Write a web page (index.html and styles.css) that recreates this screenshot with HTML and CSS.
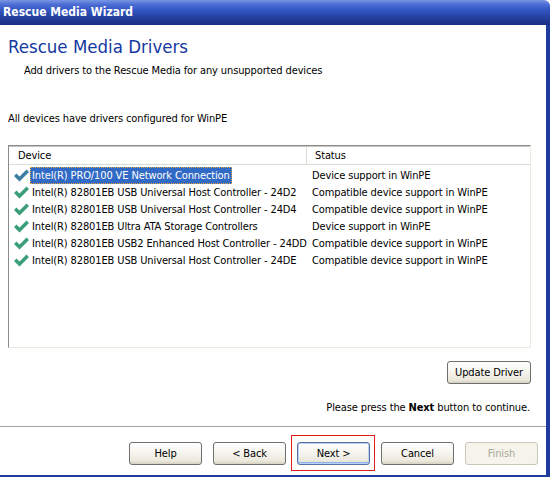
FILE: index.html
```html
<!DOCTYPE html>
<html lang="en">
<head>
    <meta charset="UTF-8">
    <title>Rescue Media Wizard</title>
    <link rel="stylesheet" href="styles.css">
</head>
<body>
    <div class="window">
        <div class="titlebar">Rescue Media Wizard</div>

        <div class="frame">
            <!-- Page header -->
            <h1 class="page-title">Rescue Media Drivers</h1>
            <div class="page-sub">Add drivers to the Rescue Media for any unsupported devices</div>

            <div class="summary">All devices have drivers configured for WinPE</div>

            <!-- Device list -->
            <div class="list">
                <div class="list-head">
                    <div class="col-device">Device</div>
                    <div class="col-status">Status</div>
                </div>
                <div class="row selected">
                    <div class="cell-device">
                        <svg class="check" viewBox="0 0 15 13"><polygon points="0,7 2.5,4.5 5.5,7.5 12.5,0.5 15,3 5.5,12.5"/></svg>
                        <span class="name">Intel(R) PRO/100 VE Network Connection</span>
                    </div>
                    <div class="cell-status">Device support in WinPE</div>
                </div>
                <div class="row">
                    <div class="cell-device">
                        <svg class="check" viewBox="0 0 15 13"><polygon points="0,7 2.5,4.5 5.5,7.5 12.5,0.5 15,3 5.5,12.5"/></svg>
                        <span class="name">Intel(R) 82801EB USB Universal Host Controller - 24D2</span>
                    </div>
                    <div class="cell-status">Compatible device support in WinPE</div>
                </div>
                <div class="row">
                    <div class="cell-device">
                        <svg class="check" viewBox="0 0 15 13"><polygon points="0,7 2.5,4.5 5.5,7.5 12.5,0.5 15,3 5.5,12.5"/></svg>
                        <span class="name">Intel(R) 82801EB USB Universal Host Controller - 24D4</span>
                    </div>
                    <div class="cell-status">Compatible device support in WinPE</div>
                </div>
                <div class="row">
                    <div class="cell-device">
                        <svg class="check" viewBox="0 0 15 13"><polygon points="0,7 2.5,4.5 5.5,7.5 12.5,0.5 15,3 5.5,12.5"/></svg>
                        <span class="name">Intel(R) 82801EB Ultra ATA Storage Controllers</span>
                    </div>
                    <div class="cell-status">Device support in WinPE</div>
                </div>
                <div class="row">
                    <div class="cell-device">
                        <svg class="check" viewBox="0 0 15 13"><polygon points="0,7 2.5,4.5 5.5,7.5 12.5,0.5 15,3 5.5,12.5"/></svg>
                        <span class="name">Intel(R) 82801EB USB2 Enhanced Host Controller - 24DD</span>
                    </div>
                    <div class="cell-status">Compatible device support in WinPE</div>
                </div>
                <div class="row">
                    <div class="cell-device">
                        <svg class="check" viewBox="0 0 15 13"><polygon points="0,7 2.5,4.5 5.5,7.5 12.5,0.5 15,3 5.5,12.5"/></svg>
                        <span class="name">Intel(R) 82801EB USB Universal Host Controller - 24DE</span>
                    </div>
                    <div class="cell-status">Compatible device support in WinPE</div>
                </div>
            </div>

            <div class="update-row">
                <button class="btn wide">Update Driver</button>
            </div>

            <div class="hint">Please press the <b>Next</b> button to continue.</div>

            <!-- Wizard buttons -->
            <div class="footer">
                <button class="btn">Help</button>
                <button class="btn">&lt; Back</button>
                <span class="marked"><button class="btn default">Next &gt;</button></span>
                <button class="btn">Cancel</button>
                <button class="btn disabled">Finish</button>
            </div>
        </div>
    </div>
</body>
</html>
```

FILE: styles.css
```css
/* Global */
* {
    box-sizing: border-box;
}

body {
    margin: 0;
    background: #fff;
    font-family: "DejaVu Sans Condensed", "DejaVu Sans", sans-serif;
    font-size: 11px;
    letter-spacing: -0.12px;
    color: #000;
}

.window {
    width: 550px;
    height: 477px;
    overflow: hidden;
    display: flex;
    flex-direction: column;
}

.titlebar {
    height: 25px;
    padding-left: 3px;
    line-height: 24px;
    color: #fff;
    font-family: "DejaVu Sans Condensed", "DejaVu Sans", sans-serif;
    font-size: 12px;
    font-weight: bold;
    letter-spacing: 0;
    background: linear-gradient(#7896e4 0%, #4c6ed4 18%, #3356c4 40%, #24409f 70%, #1a2f80 100%);
    border-top-right-radius: 6px;
}

.frame {
    flex: 1;
    background: #fff;
    border-right: 4px solid #1f3c9c;
    border-bottom: 2px solid #1f3c9c;
    display: flex;
    flex-direction: column;
}

/* Header */
.page-title {
    margin: 11px 0 0 8px;
    font-size: 18.5px;
    line-height: 22px;
    font-weight: normal;
    letter-spacing: 0;
    color: #14399f;
}

.page-sub {
    margin: 6px 0 0 24px;
    line-height: 14px;
}

.summary {
    margin: 34px 0 0 8px;
    line-height: 14px;
}

/* Device list */
.list {
    margin: 19px 0 0 8px;
    width: 523px;
    height: 203px;
    border: 1px solid;
    border-color: #8c8c8c #ecebe0 #ecebe0 #8c8c8c;
    box-shadow: inset 0 1px 0 #c8c6bc;
}

.list-head {
    display: flex;
    height: 18px;
    margin-top: 1px;
    border-bottom: 1px solid #dddbd2;
}

.col-device {
    width: 298px;
    padding-left: 9px;
    line-height: 17px;
    border-right: 1px solid #dddbd2;
}

.col-status {
    padding-left: 8px;
    line-height: 17px;
}

.row {
    display: flex;
    height: 17px;
    align-items: center;
}

.list-head + .row {
    margin-top: 2px;
}

.cell-device {
    width: 298px;
    flex-shrink: 0;
    display: flex;
    align-items: center;
    padding-left: 5px;
    white-space: nowrap;
    overflow: hidden;
}

.check {
    flex-shrink: 0;
    width: 15px;
    height: 13px;
    margin-right: 1px;
    fill: #3a9e78;
}

.name {
    padding: 1px 1px;
    border: 1px solid transparent;
    line-height: 13px;
}

.selected .check {
    fill: #3c7ea0;
}

.selected .name {
    background: #316ac5;
    color: #fff;
    border: 1px dotted #e6a23c;
}

.cell-status {
    padding-left: 5px;
    white-space: nowrap;
}

/* Buttons */
.btn {
    width: 73px;
    height: 23px;
    padding: 0;
    font-family: inherit;
    font-size: 11px;
    letter-spacing: inherit;
    color: #000;
    border: 1px solid #6f6f6f;
    border-radius: 3px;
    background: linear-gradient(#ffffff 0%, #f7f6f1 40%, #ebe8dc 85%, #d6d2c2 100%);
}

.btn.wide {
    width: 84px;
}

.btn.default {
    box-shadow: inset 0 0 0 1px #b9d1f5, inset 0 -1px 0 1px #8fb3ec;
    border-color: #5a6f99;
}

.btn.disabled {
    color: #aca899;
    border-color: #c9c7ba;
    background: #f5f4ea;
}

.update-row {
    display: flex;
    justify-content: flex-end;
    margin: 13px 15px 0 0;
}

.hint {
    margin: 17px 16px 0 0;
    text-align: right;
    line-height: 14px;
}

.footer {
    margin-top: 11px;
    padding: 15px 0 0 129px;
    border-top: 1px solid #a7a69c;
    display: flex;
    gap: 11px;
}

.marked {
    position: relative;
    display: flex;
}

/* red annotation box around Next */
.marked::after {
    content: "";
    position: absolute;
    top: -7px;
    left: -6px;
    right: -5px;
    bottom: -6px;
    border: 1px solid #e21b1b;
}
```
